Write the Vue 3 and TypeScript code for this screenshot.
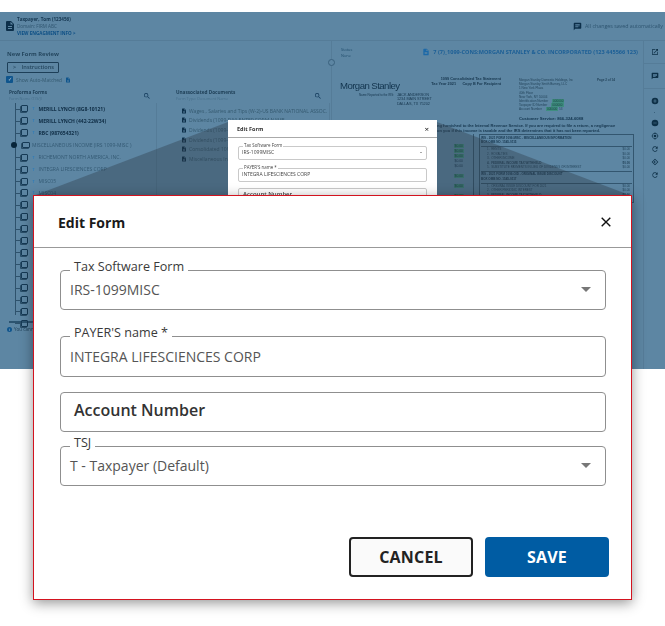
<template>
  <div class="stage">
    <!-- dimmed application behind the dialog -->
    <div class="screen">
      <header class="topbar">
        <svg class="file-icon" viewBox="0 0 24 24"><path :d="icons.file" /></svg>
        <div class="who">
          <div class="who-name">Taxpayer, Tom (123456)</div>
          <div class="who-domain">Domain: FIRM ABC</div>
          <div class="who-link">VIEW ENGAGMENT INFO &gt;</div>
        </div>
        <div class="saved">
          <svg viewBox="0 0 24 24"><path :d="icons.comment" /></svg>
          All changes saved automatically
        </div>
      </header>

      <div class="workspace">
        <section class="review">
          <h2>New Form Review</h2>
          <div class="instructions"><span>&gt;</span> Instructions</div>
          <div class="auto-match">
            <span class="check">✓</span>
            Show Auto-Matched
            <svg viewBox="0 0 24 24"><path :d="icons.file" /></svg>
          </div>
          <div class="columns">
            <div class="col-tree">
              <div class="col-head">
                <div>
                  <strong>Proforma Forms</strong>
                  <small>Form Name (T/S/J)</small>
                </div>
                <svg viewBox="0 0 24 24"><path :d="icons.search" /></svg>
              </div>
              <ul class="tree">
                <li
                  v-for="(row, i) in treeRows"
                  :key="i"
                  class="tree-row"
                  :class="{ bold: row.bold, folder: row.folder }"
                >
                  <span v-if="row.folder" class="minus"></span>
                  <span class="tree-box"></span>
                  <span v-if="!row.folder" class="tree-t">T</span>
                  <span class="tree-label">{{ row.label }}</span>
                </li>
              </ul>
              <div class="h-scroll"></div>
              <div class="notice"><span class="info">i</span> You cannot</div>
            </div>
            <div class="col-docs">
              <div class="col-head">
                <div>
                  <strong>Unassociated Documents</strong>
                  <small>Form Type: Document Name</small>
                </div>
                <svg viewBox="0 0 24 24"><path :d="icons.search" /></svg>
              </div>
              <ul class="docs">
                <li v-for="doc in unassociated" :key="doc">
                  <svg viewBox="0 0 24 24"><path :d="icons.file" /></svg>
                  {{ doc }}
                </li>
              </ul>
            </div>
          </div>
        </section>

        <span class="splitter"></span>

        <section class="viewer">
          <div class="viewer-head">
            <div class="status">Status<br />None</div>
            <div class="doc-title">
              <svg viewBox="0 0 24 24"><path :d="icons.file" /></svg>
              7 (7)_1099-CONS:MORGAN STANLEY &amp; CO. INCORPORATED (123 445566 123)
            </div>
          </div>
          <div class="statement">
            <div class="st-top">
              <div class="st-brand">
                <div class="logo">Morgan Stanley</div>
                <div class="st-name">
                  <small>Name Reported to the IRS:</small>
                  <span>JACK ANDERSON<br />1234 MAIN STREET<br />DALLAS, TX 75202</span>
                </div>
              </div>
              <div class="st-title">
                <b>1099 Consolidated Tax Statement</b>
                <b>Tax Year 2021 &nbsp; &nbsp; &nbsp;Copy B For Recipient</b>
              </div>
              <div class="st-issuer">
                <div class="page-no">Page 2 of 14</div>
                Morgan Stanley Domestic Holdings, Inc<br />
                Morgan Stanley Smith Barney, LLC<br />
                1 New York Plaza<br />
                40th Floor<br />
                New York, NY 10004<br />
                Identification Number <mark>000000</mark><br />
                Taxpayer ID Number <mark>000000</mark><br />
                Account Number <mark>000000</mark> 53
                <div class="cust">Customer Service: 866-324-6088</div>
              </div>
            </div>
            <p class="st-note">
              ng furnished to the Internal Revenue Service. If you are required to file a return, a negligence<br />
              on you if this income is taxable and the IRS determines that it has not been reported.
            </p>
            <div class="st-tables">
              <div class="st-left">
                <span v-for="(hl, n) in leftCells" :key="n" :class="{ hl }">$0.00</span>
              </div>
              <div class="st-right">
                <div v-for="t in taxTables" :key="t.title" class="tax-table">
                  <div class="tax-head">{{ t.title }}<br />BOX OMB NO. {{ t.omb }}</div>
                  <div v-for="(r, i) in t.rows" :key="r" class="tax-row" :class="{ strong: r.startsWith('FEDERAL') }">
                    <span>{{ i + 1 }}. &nbsp;{{ r }}</span><span>$0.00</span>
                  </div>
                </div>
              </div>
            </div>
          </div>
        </section>

        <aside class="rail">
          <div class="rail-group first">
            <svg viewBox="0 0 24 24"><path :d="icons.open" /></svg>
          </div>
          <div class="rail-group">
            <svg viewBox="0 0 24 24"><path :d="icons.comment" /></svg>
          </div>
          <div class="rail-tools">
            <svg viewBox="0 0 24 24"><path :d="icons.plus" /></svg>
            <span class="rail-dot"></span>
            <svg v-for="(t, i) in railTools" :key="i" viewBox="0 0 24 24"><path :d="icons[t]" /></svg>
          </div>
        </aside>
      </div>

      <!-- shadow wedges thrown from the small dialog to the big one -->
      <svg class="wedges" viewBox="0 0 665 357">
        <polygon points="228,110 33,184 228,184" />
        <polygon points="437,110 632,184 437,184" />
      </svg>

      <div class="mini-modal">
        <div class="mini-head"><b>Edit Form</b><span>×</span></div>
        <div class="mini-field"><label>Tax Software Form</label>IRS-1099MISC<i></i></div>
        <div class="mini-field"><label>PAYER'S name *</label>INTEGRA LIFESCIENCES CORP</div>
        <div class="mini-field mini-plain">Account Number</div>
      </div>
    </div>

    <!-- enlarged dialog -->
    <div class="modal">
      <div class="modal-head">
        <h1>Edit Form</h1>
        <svg class="close" viewBox="0 0 10 10"><path d="M.7.7l8.6 8.6M9.3.7L.7 9.3" /></svg>
      </div>
      <div class="modal-body">
        <div v-for="f in fields" :key="f.key" class="field" :class="f.key">
          <label v-if="f.label">{{ f.label }}</label>
          <span class="value">{{ f.value }}</span>
          <span v-if="f.select" class="caret"></span>
        </div>
      </div>
      <div class="modal-foot">
        <button class="btn cancel">CANCEL</button>
        <button class="btn save">SAVE</button>
      </div>
    </div>
  </div>
</template>

<script setup lang="ts">
interface TreeRow {
  label: string
  bold?: boolean
  folder?: boolean
}

const icons: Record<string, string> = {
  file: 'M14 2H6a2 2 0 0 0-2 2v16a2 2 0 0 0 2 2h12a2 2 0 0 0 2-2V8l-6-6zm2 16H8v-2h8v2zm0-4H8v-2h8v2zm-3-5V3.5L18.5 9H13z',
  search: 'M15.5 14h-.79l-.28-.27A6.47 6.47 0 0 0 16 9.5 6.5 6.5 0 1 0 9.5 16c1.61 0 3.09-.59 4.23-1.57l.27.28v.79l5 4.99L20.49 19l-4.99-5zm-6 0a4.5 4.5 0 1 1 0-9 4.5 4.5 0 0 1 0 9z',
  open: 'M19 19H5V5h7V3H5a2 2 0 0 0-2 2v14a2 2 0 0 0 2 2h14c1.1 0 2-.9 2-2v-7h-2v7zM14 3v2h3.59l-9.83 9.83 1.41 1.41L19 6.41V10h2V3h-7z',
  comment: 'M20 2H4a2 2 0 0 0-2 2v18l4-4h14a2 2 0 0 0 2-2V4a2 2 0 0 0-2-2zM6 9h12v2H6V9zm8 5H6v-2h8v2zm4-6H6V6h12v2z',
  plus: 'M12 2a10 10 0 1 0 0 20 10 10 0 0 0 0-20zm5 11h-4v4h-2v-4H7v-2h4V7h2v4h4v2z',
  minus: 'M12 2a10 10 0 1 0 0 20 10 10 0 0 0 0-20zm5 11H7v-2h10v2z',
  target: 'M12 8a4 4 0 1 0 0 8 4 4 0 0 0 0-8zm8.94 3A8.99 8.99 0 0 0 13 3.06V1h-2v2.06A8.99 8.99 0 0 0 3.06 11H1v2h2.06A8.99 8.99 0 0 0 11 20.94V23h2v-2.06A8.99 8.99 0 0 0 20.94 13H23v-2h-2.06zM12 19a7 7 0 1 1 0-14 7 7 0 0 1 0 14z',
  rotate: 'M17.65 6.35A7.96 7.96 0 0 0 12 4a8 8 0 1 0 7.73 10h-2.08A6 6 0 1 1 12 6c1.66 0 3.14.69 4.22 1.78L13 11h7V4l-2.35 2.35z',
  fit: 'M12 2 2 12l10 10 10-10L12 2zm0 3 7 7-7 7-7-7 7-7zm-4 7 4 4v-3h3v-2h-3V8l-4 4z'
}

const railTools = ['minus', 'target', 'rotate', 'fit', 'rotate']

const leftCells = [true, true, true, false, false, true, true, true]

const treeRows: TreeRow[] = [
  { label: 'MERILL LYNCH (8G8-10121)', bold: true },
  { label: 'MERILL LYNCH (442-22W34)', bold: true },
  { label: 'RBC (987654321)', bold: true },
  { label: 'MISCELLANEOUS INCOME (IRS 1099-MISC )', folder: true },
  { label: 'RICHEMONT NORTH AMERICA, INC.' },
  { label: 'INTEGRA LIFESCIENCES CORP' },
  { label: 'MISC05' },
  { label: 'MISC04' },
  ...['MISC03', 'MISC02', 'MISC01', 'DIV01', 'DIV02', 'DIV03', 'INT01', 'INT02', 'INT03', 'INT04', 'INT05'].map(
    (label) => ({ label })
  )
]

const unassociated = [
  'Wages , Salaries and Tips (W-2)-US BANK NATIONAL ASSOC.',
  'Dividends (1099-DIV) ENTER FORM NAME',
  'Dividends (1099-DIV)',
  'Dividends (1099-DIV)',
  'Consolidated 1099',
  'Miscellaneous Income'
]

const taxTables = [
  {
    title: 'IRS - 2021 FORM 1099-MISC - MISCELLANEOUS INFORMATION',
    omb: '1545-0115',
    rows: ['RENTS', 'ROYALTIES', 'OTHER INCOME', 'FEDERAL INCOME TAX WITHHELD', 'SUBSTITUTE PAYMENTS IN LIEU OF DIVIDENDS OR INTEREST']
  },
  {
    title: 'IRS - 2021 FORM 1099-OID - ORIGINAL ISSUE DISCOUNT',
    omb: '1545-0117',
    rows: ['ORIGINAL ISSUE DISCOUNT FOR 2021', 'OTHER PERIODIC INTEREST', 'FEDERAL INCOME TAX WITHHELD', 'MARKET DISCOUNT']
  }
]

const fields = [
  { key: 'software', label: 'Tax Software Form', value: 'IRS-1099MISC', select: true },
  { key: 'payer', label: "PAYER'S name *", value: 'INTEGRA LIFESCIENCES CORP', select: false },
  { key: 'account', label: '', value: 'Account Number', select: false },
  { key: 'tsj', label: 'TSJ', value: 'T - Taxpayer (Default)', select: true }
]
</script>

<style>
body {
  margin: 0;
  background: #fff;
}
</style>

<style scoped>
.stage {
  position: relative;
  width: 665px;
  height: 626px;
  padding-top: 12px;
  box-sizing: border-box;
  overflow: hidden;
  background: #fff;
  font-family: 'Open Sans', 'Liberation Sans', sans-serif;
}

/* background app */
.screen {
  position: relative;
  height: 357px;
  overflow: hidden;
  background: #5d86a3;
  color: #2b5068;
  filter: blur(0.45px);
}

svg {
  fill: currentColor;
  flex: none;
}

.topbar {
  display: flex;
  align-items: center;
  height: 29px;
  padding: 0 2px 0 4px;
  box-sizing: border-box;
  border-bottom: 1px solid #557c98;
}

.file-icon {
  width: 12px;
  height: 14px;
  color: #0c2f4a;
}

.who {
  margin-left: 1px;
  font-size: 4.6px;
  line-height: 7px;
}

.who-name {
  font-weight: 700;
  color: #143650;
}

.who-domain {
  color: #2f5570;
}

.who-link {
  font-weight: 700;
  color: #0d4f85;
}

.saved {
  margin-left: auto;
  display: flex;
  align-items: center;
  gap: 3px;
  font-size: 5.3px;
  color: #2e5570;
}

.saved svg {
  width: 9px;
  height: 9px;
  color: #0c2f4a;
}

.workspace {
  display: flex;
  height: 328px;
}

.review {
  width: 330px;
  padding: 9px 0 0 7px;
  box-sizing: border-box;
}

.review h2 {
  margin: 0;
  font-size: 5.8px;
  line-height: 8px;
  font-weight: 700;
  color: #25475f;
}

.instructions {
  width: 52px;
  height: 11px;
  margin-top: 4px;
  box-sizing: border-box;
  border: 1px solid #1d3f58;
  border-radius: 1px;
  font-size: 5.6px;
  line-height: 9px;
  font-weight: 600;
  color: #25475f;
}

.instructions span {
  margin: 0 4px 0 5px;
}

.auto-match {
  display: flex;
  align-items: center;
  gap: 3px;
  height: 7px;
  margin: 3px 0 0 -1px;
  font-size: 4.9px;
  color: #34596f;
}

.auto-match svg {
  width: 6px;
  height: 6px;
  color: #0f558d;
}

.check {
  width: 7px;
  height: 7px;
  border-radius: 1px;
  background: #0f558d;
  color: #bcd;
  font-size: 5px;
  line-height: 7px;
  text-align: center;
}

.columns {
  display: flex;
  margin-top: 5px;
}

.col-tree {
  width: 167px;
  flex: none;
}

.col-docs {
  flex: 1;
  min-width: 0;
}

.col-head {
  display: flex;
  align-items: center;
  justify-content: space-between;
  height: 15px;
  padding: 0 4px 0 2px;
  width: 148px;
  box-sizing: border-box;
}

.col-docs .col-head {
  padding: 0 0 0 2px;
}

.col-head strong {
  display: block;
  font-size: 4.7px;
  line-height: 6.5px;
  color: #1f4058;
}

.col-head small {
  display: block;
  font-size: 3.9px;
  line-height: 6px;
  color: #47708c;
}

.col-head svg {
  width: 8px;
  height: 8px;
  color: #12395a;
}

.tree {
  list-style: none;
  margin: 0;
  padding: 0 0 0 8px;
  height: 216px;
  width: 150px;
  box-sizing: border-box;
  border-right: 1px solid #557c98;
  position: relative;
}

.tree::before {
  content: '';
  position: absolute;
  left: 8px;
  top: 0;
  bottom: 4px;
  width: 1px;
  background: #2e526c;
}

.tree-row {
  position: relative;
  display: flex;
  align-items: center;
  height: 11.85px;
  padding-left: 6px;
  font-size: 5px;
  color: #345a74;
  white-space: nowrap;
}

.tree-row::before {
  content: '';
  position: absolute;
  left: 0;
  top: 50%;
  width: 6px;
  height: 1px;
  background: #2e526c;
}

.tree-row.bold {
  font-weight: 700;
  color: #0e2c44;
}

.tree-row.folder {
  margin-left: 0;
  height: 13px;
}

.tree-row.folder::before {
  display: none;
}

.tree-box {
  width: 4.5px;
  height: 5px;
  border: 1px solid #163a55;
  border-radius: 1px;
  box-shadow: -1px 1px 0 #2a4e68;
  margin-right: 4px;
  flex: none;
}

.folder .tree-box {
  width: 6px;
  height: 4px;
  margin: 0 2px 0 1px;
}

.minus {
  width: 6px;
  height: 6px;
  margin-left: -10px;
  margin-right: 4px;
  border-radius: 50%;
  background: #082539;
  flex: none;
}

.tree-t {
  width: 4px;
  margin-right: 3px;
  font-size: 3.5px;
  color: #2f7cb8;
  font-weight: 700;
  text-align: center;
}

.h-scroll {
  width: 144px;
  height: 2px;
  margin: 2px 0 0 2px;
  background: #2c5470;
}

.notice {
  display: flex;
  align-items: center;
  gap: 2px;
  margin-top: 3px;
  font-size: 4.6px;
  color: #1f4058;
}

.info {
  width: 5px;
  height: 5px;
  border-radius: 50%;
  background: #0f558d;
  color: #bcd;
  font-size: 4px;
  line-height: 5px;
  text-align: center;
}

.docs {
  list-style: none;
  margin: 0;
  padding: 3px 0 0 7px;
  height: 214px;
  box-sizing: border-box;
  border-right: 1px solid #557c98;
}

.docs li {
  display: flex;
  align-items: center;
  gap: 2px;
  height: 9.6px;
  font-size: 5px;
  color: #34596f;
  white-space: nowrap;
}

.docs svg {
  width: 6px;
  height: 6px;
  color: #0c2f4a;
}

.splitter {
  position: relative;
  width: 1px;
  background: #557c98;
  flex: none;
  margin-left: 1px;
}

.splitter::after {
  content: '';
  position: absolute;
  left: -3px;
  top: 18px;
  width: 5px;
  height: 5px;
  border: 1px solid #3a617d;
  border-radius: 50%;
  background: #5d86a3;
}

.viewer {
  width: 311px;
  flex: none;
  padding: 6px 0 0 8px;
  box-sizing: border-box;
}

.viewer-head {
  display: flex;
  justify-content: space-between;
  align-items: flex-start;
  height: 22px;
}

.status {
  margin-left: 1px;
  font-size: 3.9px;
  line-height: 6px;
  color: #24506f;
}

.doc-title {
  display: flex;
  align-items: center;
  gap: 3px;
  margin: 0 5px 0 0;
  font-size: 5.55px;
  font-weight: 700;
  color: #1c5f96;
  white-space: nowrap;
  line-height: 10px;
}

.doc-title svg {
  width: 8px;
  height: 10px;
  color: #1c69a8;
}

.statement {
  font-family: 'Liberation Sans', Arial, sans-serif;
  color: #17374f;
  font-size: 3.4px;
  line-height: 4.4px;
}

.st-top {
  display: flex;
  height: 54px;
}

.st-brand {
  width: 80px;
  flex: none;
}

.logo {
  font-size: 9.6px;
  line-height: 12px;
  letter-spacing: -0.55px;
  color: #12344e;
  margin-top: 11px;
  white-space: nowrap;
}

.st-name {
  display: flex;
  gap: 3px;
  margin: 1px 0 0 19px;
  white-space: nowrap;
  font-size: 3.8px;
}

.st-name small {
  font-size: 2.9px;
}

.st-title {
  width: 99px;
  flex: none;
  margin-top: 8px;
  display: flex;
  flex-direction: column;
  align-items: flex-end;
  padding-right: 18px;
  box-sizing: border-box;
  font-size: 3.8px;
  line-height: 5px;
  white-space: nowrap;
}

.st-issuer {
  position: relative;
  margin-top: 9px;
  width: 125px;
  font-size: 3.1px;
  line-height: 4.2px;
  white-space: nowrap;
  color: #25465d;
}

.page-no {
  position: absolute;
  left: 78px;
  top: 0;
  font-weight: 700;
}

.st-issuer mark {
  background: #3f8d80;
  color: #17433f;
  margin-left: 3px;
  padding: 0 1px;
}

.cust {
  margin-top: 5px;
  font-size: 4.2px;
  font-weight: 700;
  color: #12344e;
}

.st-note {
  margin: 0 0 1px 97px;
  font-size: 4.05px;
  line-height: 5px;
  white-space: nowrap;
  font-weight: 700;
  color: #17374f;
}

.st-tables {
  display: flex;
  gap: 5px;
}

.st-left {
  width: 134px;
  flex: none;
  display: flex;
  flex-direction: column;
  align-items: flex-end;
  gap: 0.6px;
  padding: 10px 9px 0 0;
  box-sizing: border-box;
  border-right: 1px solid #33566f;
}

.st-left span {
  padding: 0 1px;
}

.st-left span:nth-child(n + 6) {
  margin-top: 5px;
}

.st-left .hl {
  background: #3f8d80;
  color: #17433f;
}

.st-right {
  width: 155px;
  flex: none;
  border: 1px solid #33566f;
  padding: 1px;
  box-sizing: border-box;
}

.tax-table + .tax-table {
  margin-top: 2px;
  border-top: 1px solid #33566f;
}

.tax-head {
  font-size: 3px;
  line-height: 4.2px;
  font-weight: 700;
  padding-bottom: 2px;
  border-bottom: 1px solid #33566f;
}

.tax-row {
  display: flex;
  justify-content: space-between;
  font-size: 3px;
  line-height: 4.4px;
  padding: 0 2px 0 6px;
  white-space: nowrap;
  color: #25465d;
}

.tax-row.strong {
  font-weight: 700;
}

.rail {
  flex: 1;
  border-left: 1px solid #557c98;
  color: #0e3047;
}

.rail-group {
  display: flex;
  justify-content: center;
  align-items: center;
  height: 24px;
  border-bottom: 1px solid #557c98;
}

.rail-group.first {
  height: 22px;
}

.rail svg {
  width: 8px;
  height: 8px;
}

.rail-tools {
  display: flex;
  flex-direction: column;
  align-items: center;
  gap: 5px;
  padding-top: 8px;
}

.rail-dot {
  width: 1px;
  height: 1px;
  margin: 2px 0 1px;
  background: #3a617d;
}

.wedges {
  position: absolute;
  left: 0;
  top: 0;
  width: 665px;
  height: 357px;
  fill: rgba(45, 58, 70, 0.38);
  pointer-events: none;
}

.mini-modal {
  position: absolute;
  left: 228px;
  top: 108px;
  width: 209px;
  height: 100px;
  background: #fff;
  color: #333;
}

.mini-head {
  display: flex;
  justify-content: space-between;
  align-items: center;
  height: 17px;
  padding: 0 8px 0 9px;
  border-bottom: 1px solid #aaa;
  font-size: 5.5px;
}

.mini-head span {
  font-size: 8px;
  color: #111;
}

.mini-field {
  position: relative;
  width: 189px;
  height: 14px;
  margin: 8px 0 0 10px;
  padding-left: 3px;
  box-sizing: border-box;
  border: 1.5px solid #c9c9c9;
  border-radius: 2px;
  font-size: 5px;
  line-height: 11px;
  color: #444;
}

.mini-field label {
  position: absolute;
  left: 4px;
  top: -4px;
  padding: 0 1px;
  background: #fff;
  font-size: 4.4px;
  line-height: 5px;
}

.mini-field i {
  position: absolute;
  right: 4px;
  top: 5px;
  border: 1.5px solid transparent;
  border-top-color: #555;
}

.mini-plain {
  font-size: 6px;
  font-weight: 600;
  padding-left: 4px;
  margin-top: 6px;
}

/* big dialog */
.modal {
  position: absolute;
  left: 33px;
  top: 195px;
  display: flex;
  flex-direction: column;
  width: 599px;
  height: 405px;
  box-sizing: border-box;
  border: 1px solid #d3131f;
  background: #fff;
  box-shadow: 0 3px 12px rgba(0, 0, 0, 0.42);
}

.modal-head {
  display: flex;
  align-items: center;
  justify-content: space-between;
  height: 52px;
  flex: none;
  padding: 2px 20px 0 24px;
  box-sizing: border-box;
  border-bottom: 1px solid #999;
}

.modal-head h1 {
  margin: 0;
  font-size: 14px;
  font-weight: 700;
  color: #1a1a1a;
}

.close {
  width: 10px;
  height: 10px;
  margin-top: -2px;
  fill: none;
  stroke: #111;
  stroke-width: 1.4;
}

.modal-body {
  flex: 1;
  padding: 22px 25px 0 26px;
}

.field {
  position: relative;
  display: flex;
  align-items: center;
  justify-content: space-between;
  height: 40px;
  padding: 0 14px 2px 9px;
  box-sizing: border-box;
  border: 1px solid #8f8f8f;
  border-top-width: 1.5px;
  border-bottom-width: 1.5px;
  border-radius: 4px;
  font-size: 14px;
  color: #555;
}

.field.payer {
  height: 41px;
  margin-top: 26px;
  padding-bottom: 0;
}

.field.account {
  margin-top: 15px;
  padding-left: 13px;
  padding-bottom: 4px;
  font-size: 16px;
  font-weight: 600;
  color: #333;
}

.field.tsj {
  margin-top: 14px;
}

.field label {
  position: absolute;
  left: 9px;
  top: -13px;
  padding: 0 4px;
  background: #fff;
  font-size: 12.6px;
  line-height: 18px;
  font-weight: 500;
  color: #3a3a3a;
}

.caret {
  border: 5.5px solid transparent;
  border-top: 5.5px solid #777;
  border-bottom: 0;
}

.modal-foot {
  display: flex;
  justify-content: flex-end;
  gap: 12px;
  flex: none;
  padding: 0 22px 22px 0;
}

.btn {
  width: 124px;
  height: 40px;
  box-sizing: border-box;
  border-radius: 4px;
  font-family: inherit;
  font-size: 16px;
  font-weight: 700;
  letter-spacing: 0.2px;
}

.cancel {
  border: 2px solid #222;
  background: #fafafa;
  color: #222;
}

.save {
  border: 0;
  background: #005ca3;
  color: #fff;
}
</style>
